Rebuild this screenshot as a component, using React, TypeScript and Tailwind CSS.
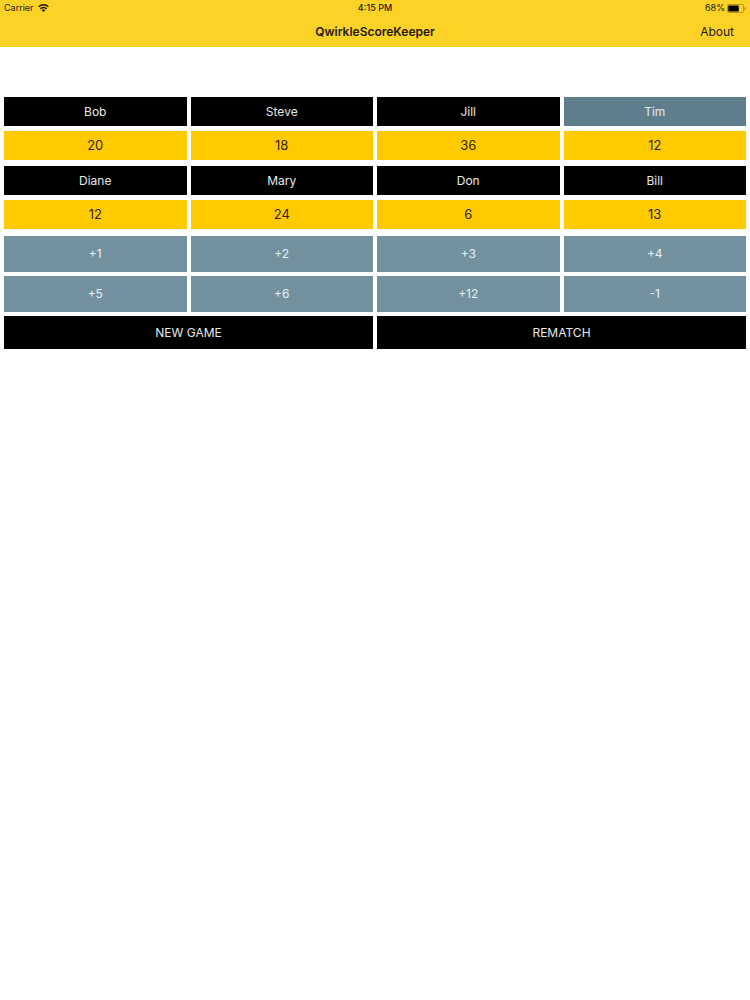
type Player = {
  name: string;
  score: number;
  active?: boolean;
};

const ROWS: Player[][] = [
  [
    { name: "Bob", score: 20 },
    { name: "Steve", score: 18 },
    { name: "Jill", score: 36 },
    { name: "Tim", score: 12, active: true },
  ],
  [
    { name: "Diane", score: 12 },
    { name: "Mary", score: 24 },
    { name: "Don", score: 6 },
    { name: "Bill", score: 13 },
  ],
];

const POINTS = ["+1", "+2", "+3", "+4", "+5", "+6", "+12", "-1"];

function WifiIcon() {
  return (
    <svg viewBox="0 0 22 16" className="h-2 w-[11px]" aria-hidden="true">
      <g fill="none" stroke="currentColor" strokeWidth="3.2">
        <path d="M1.4 5.6a13.6 13.6 0 0 1 19.2 0" />
        <path d="M4.8 9.700a8.800 8.800 0 0 1 12.400 0" />
      </g>
      <path d="M11 15.8 7.400 12.400a5 5 0 0 1 7.200 0z" fill="currentColor" />
    </svg>
  );
}

function BatteryIcon() {
  return (
    <svg viewBox="0 0 38 18" className="h-[9px] w-[19px]" aria-hidden="true">
      <rect x="1" y="1" width="32" height="16" rx="2.5" fill="none" stroke="currentColor" strokeOpacity="0.45" strokeWidth="1.4" />
      <rect x="2.5" y="3" width="21" height="12" rx="1" fill="#000" />
      <path d="M35 6v6c1.4-.4 2.2-1.6 2.2-3S36.4 6.4 35 6z" fill="currentColor" fillOpacity="0.5" />
    </svg>
  );
}

export default function App() {
  return (
    <div className="min-h-screen bg-white font-['Inter',sans-serif] text-xs">
      <header className="bg-[#fcd227] text-[#241a0c]">
        {/* Status bar */}
        <div className="grid h-4 grid-cols-3 items-center px-1 text-[9px] leading-3">
          <div className="flex items-center gap-1">
            <span>Carrier</span>
            <WifiIcon />
          </div>
          <span className="text-center font-medium">4:15 PM</span>
          <div className="flex items-center justify-end gap-0.5">
            <span>68%</span>
            <BatteryIcon />
          </div>
        </div>

        {/* Navigation bar */}
        <div className="grid h-[31px] grid-cols-[1fr_auto_1fr] items-center px-4">
          <h1 className="col-start-2 font-semibold">QwirkleScoreKeeper</h1>
          <a href="#about" className="justify-self-end">
            About
          </a>
        </div>
      </header>

      <main className="px-1 pt-[50px]">
        <div className="flex flex-col gap-1.5">
          {ROWS.map((row, i) => (
            <div key={i} className="grid grid-cols-4 gap-1">
              {row.map((player) => (
                <div key={player.name} className="flex flex-col gap-[5px]">
                  <button
                    type="button"
                    className={
                      player.active
                        ? "h-[29px] bg-[#607d8b] text-[#e4eef2]"
                        : "h-[29px] bg-black text-[#e8e8e8]"
                    }
                  >
                    {player.name}
                  </button>
                  <div className="flex h-[29px] items-center justify-center bg-[#ffcb00] text-[13px] text-[#33240a]">
                    {player.score}
                  </div>
                </div>
              ))}
            </div>
          ))}
        </div>

        <div className="mt-[7px] grid grid-cols-4 gap-1">
          {POINTS.map((points) => (
            <button key={points} type="button" className="h-9 bg-[#74919f] text-[#e4f2f5]">
              {points}
            </button>
          ))}
        </div>

        <div className="mt-1 grid grid-cols-2 gap-1">
          <button type="button" className="h-[33px] bg-black text-[#e8e8e8]">
            NEW GAME
          </button>
          <button type="button" className="h-[33px] bg-black text-[#e8e8e8]">
            REMATCH
          </button>
        </div>
      </main>
    </div>
  );
}
